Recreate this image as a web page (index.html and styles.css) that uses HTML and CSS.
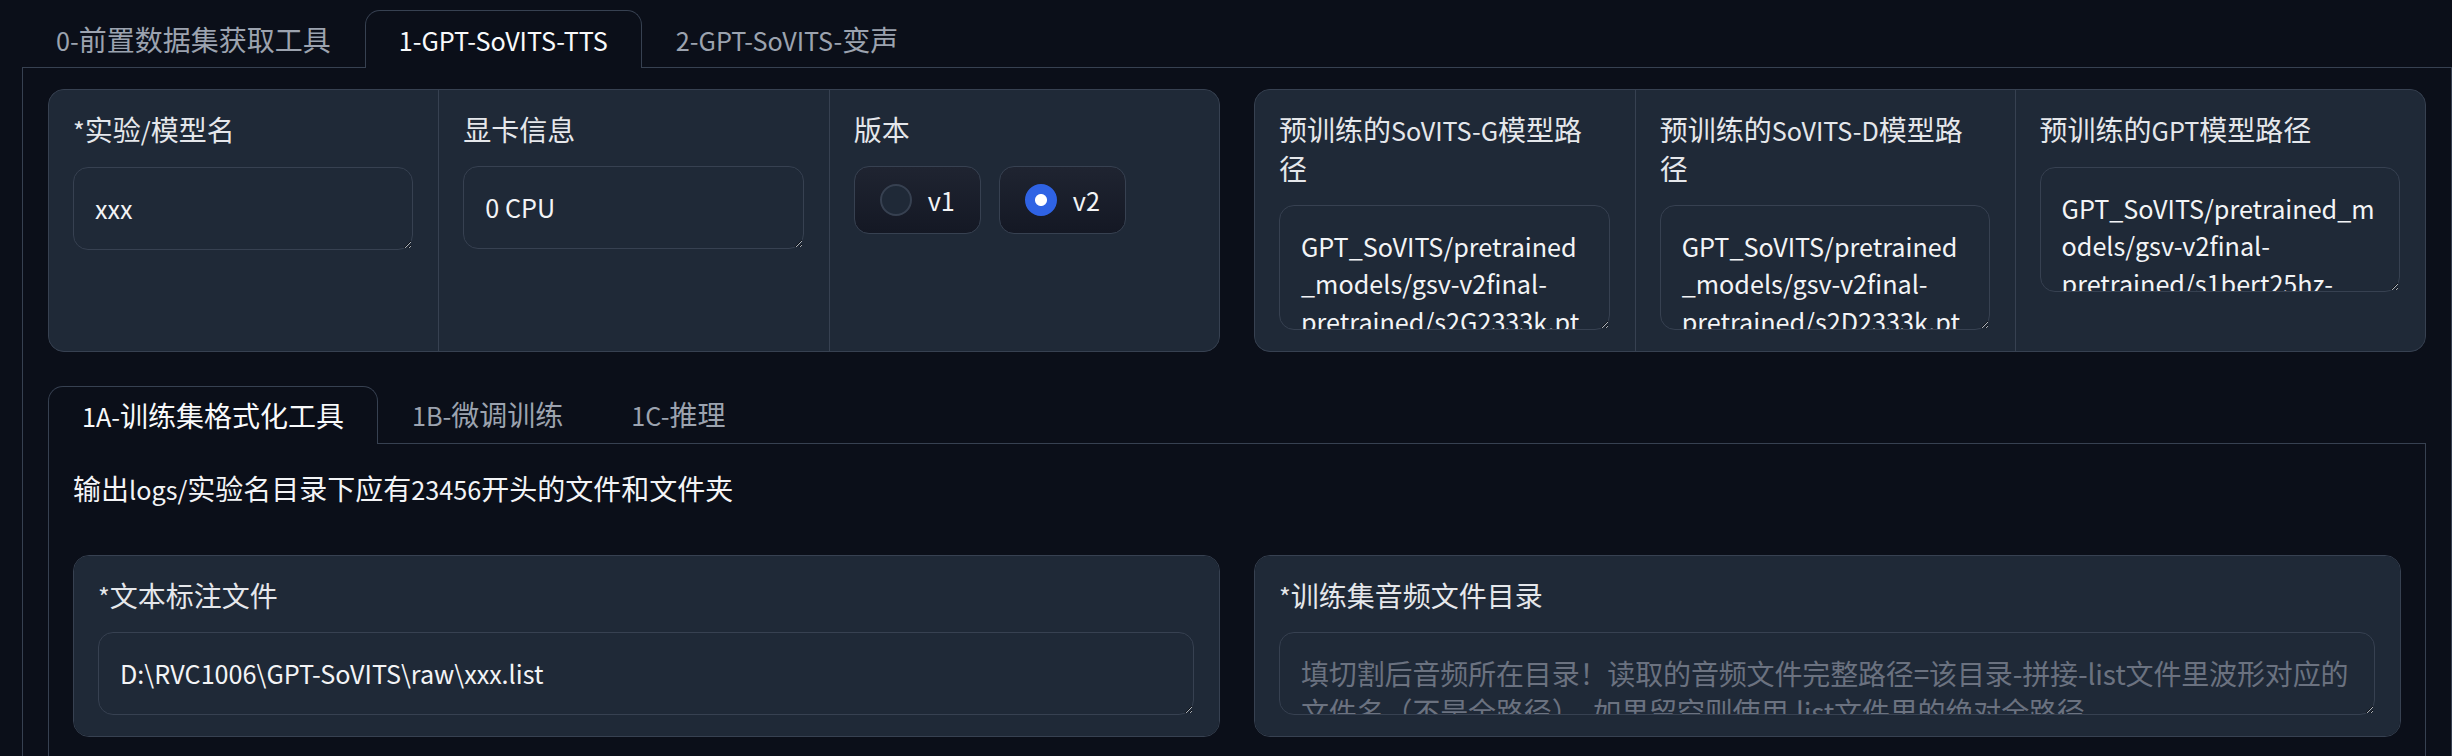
FILE: index.html
```html
<!DOCTYPE html>
<html lang="zh-CN">
<head>
<meta charset="utf-8">
<title>GPT-SoVITS WebUI</title>
<link rel="stylesheet" href="styles.css">
</head>
<body>
<div class="app">
  <div class="tabs">
    <div class="tab-nav">
      <button class="tab"><span class="lt">0-</span>前置数据集获取工具</button>
      <button class="tab selected"><span class="lt">1-GPT-SoVITS-TTS</span></button>
      <button class="tab"><span class="lt">2-GPT-SoVITS-</span>变声</button>
    </div>
    <div class="tab-panel outer-panel">
      <div class="row">
        <div class="form">
          <div class="block">
            <label class="label"><span class="lt">*</span>实验<span class="lt">/</span>模型名</label>
            <textarea class="input single">xxx</textarea>
          </div>
          <div class="block">
            <label class="label">显卡信息</label>
            <textarea class="input single">0 CPU</textarea>
          </div>
          <div class="block">
            <label class="label">版本</label>
            <div class="radio-group">
              <label class="radio"><input type="radio" name="ver" value="v1"><span class="lt">v1</span></label>
              <label class="radio"><input type="radio" name="ver" value="v2" checked><span class="lt">v2</span></label>
            </div>
          </div>
        </div>
        <div class="form">
          <div class="block b-g">
            <label class="label">预训练的<span class="lt">SoVITS-G</span>模型路径</label>
            <textarea class="input tall">GPT_SoVITS/pretrained_models/gsv-v2final-pretrained/s2G2333k.pth</textarea>
          </div>
          <div class="block b-d">
            <label class="label">预训练的<span class="lt">SoVITS-D</span>模型路径</label>
            <textarea class="input tall">GPT_SoVITS/pretrained_models/gsv-v2final-pretrained/s2D2333k.pth</textarea>
          </div>
          <div class="block b-gpt">
            <label class="label">预训练的<span class="lt">GPT</span>模型路径</label>
            <textarea class="input tall">GPT_SoVITS/pretrained_models/gsv-v2final-pretrained/s1bert25hz-5kh-longer-epoch=12-step=369668.ckpt</textarea>
          </div>
        </div>
      </div>

      <div class="tabs sub">
        <div class="tab-nav">
          <button class="tab selected"><span class="lt">1A-</span>训练集格式化工具</button>
          <button class="tab"><span class="lt">1B-</span>微调训练</button>
          <button class="tab"><span class="lt">1C-</span>推理</button>
        </div>
        <div class="tab-panel sub-panel">
          <div class="markdown">输出<span class="lt">logs/</span>实验名目录下应有<span class="lt">23456</span>开头的文件和文件夹</div>
          <div class="row">
            <div class="form">
              <div class="block">
                <label class="label"><span class="lt">*</span>文本标注文件</label>
                <textarea class="input single">D:\RVC1006\GPT-SoVITS\raw\xxx.list</textarea>
              </div>
            </div>
            <div class="form">
              <div class="block">
                <label class="label"><span class="lt">*</span>训练集音频文件目录</label>
                <textarea class="input single ph" placeholder="填切割后音频所在目录！读取的音频文件完整路径=该目录-拼接-list文件里波形对应的文件名（不是全路径）。如果留空则使用.list文件里的绝对全路径。"></textarea>
              </div>
            </div>
          </div>
        </div>
      </div>
    </div>
  </div>
</div>
</body>
</html>
```

FILE: styles.css
```css
* {
  box-sizing: border-box;
}

html,
body {
  margin: 0;
  background: #0b0f19;
}

body {
  font-family: "Noto Sans CJK SC", "Noto Sans", sans-serif;
  color: #f3f4f6;
  overflow: hidden;
  height: 756px;
}

/* Latin runs: CJK font's Latin glyphs are drawn ~11% larger than the UI's Latin face */
.lt {
  font-size: 0.9em;
}

.app {
  padding: 10px 0 0 22px;
}

.tab-nav {
  display: flex;
  height: 58px;
  border-bottom: 1px solid #374151;
}

.tab {
  font-family: inherit;
  font-size: 28px;
  line-height: 1;
  height: 57px;
  padding: 0 33px;
  background: none;
  border: 1px solid transparent;
  border-bottom: none;
  border-radius: 15px 15px 0 0;
  color: #9ca3af;
  cursor: pointer;
}

.tab.selected {
  height: 58px;
  margin-bottom: -1px;
  border-color: #374151;
  background: #0b0f19;
  color: #f9fafb;
}

.tab-panel {
  border: 1px solid #374151;
  border-top: none;
}

.outer-panel {
  display: flex;
  flex-direction: column;
  gap: 34px;
  padding: 21px 25px 0 25px;
  height: 700px;
}

.sub-panel {
  padding: 25px 24px 0 24px;
  height: 400px;
}

.row {
  display: flex;
  gap: 34px;
}

.form {
  flex: 1 1 0;
  min-width: 0;
  display: flex;
  gap: 1px;
  background: #374151;
  border: 1px solid #374151;
  border-radius: 16px;
  overflow: hidden;
}

.block {
  flex: 1 1 0;
  min-width: 0;
  background: #1f2937;
  padding: 21px 25px 21px 24px;
}

.b-g {
  flex-grow: 378;
}

.b-d {
  flex-grow: 377;
}

.b-gpt {
  flex-grow: 412;
}

.label {
  display: block;
  font-size: 28px;
  line-height: 37.8px;
  color: #e5e7eb;
  margin-bottom: 17px;
}

.b-g .label,
.b-d .label {
  margin-right: 2px;
}

.input {
  display: block;
  width: 100%;
  margin: 0;
  font-family: inherit;
  font-size: 25.2px;
  line-height: 37.5px;
  color: #f3f4f6;
  background: #1f2937;
  border: 1px solid #374151;
  border-radius: 15px;
  padding: 22px 21px 21.5px 21px;
  resize: vertical;
  overflow: hidden;
  color-scheme: dark;
  outline: none;
}

.input.ph {
  font-size: 28px;
  letter-spacing: -0.15px;
}

.input::placeholder {
  color: #6b7280;
}

.single {
  height: 83px;
}

.tall {
  height: 125px;
}

.radio-group {
  display: flex;
  gap: 18px;
}

.radio {
  display: flex;
  align-items: center;
  gap: 16px;
  height: 68px;
  padding: 0 25px;
  border: 1px solid #374151;
  border-radius: 15px;
  background: linear-gradient(to bottom, #1f2431, #141824);
  font-size: 28px;
  color: #f3f4f6;
  cursor: pointer;
}

.radio input {
  appearance: none;
  margin: 0;
  width: 32px;
  height: 32px;
  border-radius: 50%;
  border: 2px solid #374151;
  background: #1f2937;
}

.radio input:checked {
  border-color: #2f63e4;
  background: radial-gradient(circle, #ffffff 0 5.5px, #2f63e4 6.5px);
}

.markdown {
  font-size: 28px;
  line-height: 38px;
  color: #f3f4f6;
  margin-bottom: 47px;
}
```
